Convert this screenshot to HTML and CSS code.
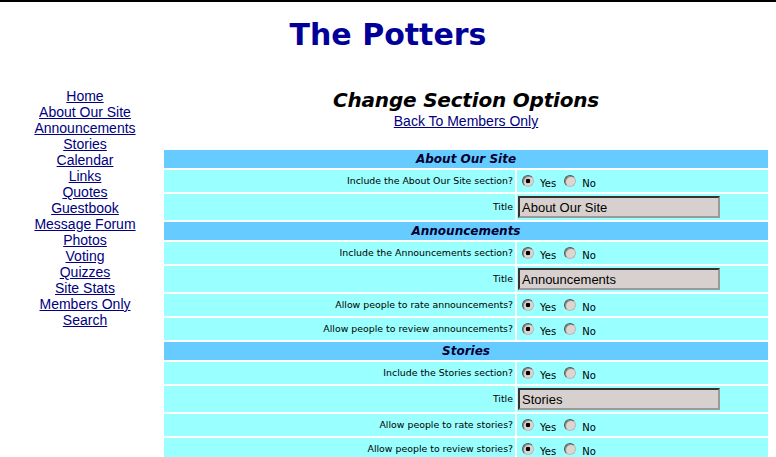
FILE: index.html
```html
<!DOCTYPE html>
<html lang="en">
<head>
<meta charset="utf-8">
<title>The Potters - Change Section Options</title>
<link rel="stylesheet" href="styles.css">
</head>
<body>
<div class="topline"></div>
<div class="page">
  <div class="site-title">The Potters</div>
  <div class="layout">
    <nav class="nav">
      <a href="#">Home</a>
      <a href="#">About Our Site</a>
      <a href="#">Announcements</a>
      <a href="#">Stories</a>
      <a href="#">Calendar</a>
      <a href="#">Links</a>
      <a href="#">Quotes</a>
      <a href="#">Guestbook</a>
      <a href="#">Message Forum</a>
      <a href="#">Photos</a>
      <a href="#">Voting</a>
      <a href="#">Quizzes</a>
      <a href="#">Site Stats</a>
      <a href="#">Members Only</a>
      <a href="#">Search</a>
    </nav>
    <main class="content">
      <h1 class="heading">Change Section Options</h1>
      <div class="back"><a href="#">Back To Members Only</a></div>
      <form class="options">
        <div class="sec">About Our Site</div>
        <div class="q">Include the About Our Site section?</div>
        <div class="a"><input type="radio" name="about" checked><span class="opt">Yes</span><input type="radio" name="about"><span class="opt">No</span></div>
        <div class="q tall">Title</div>
        <div class="a tall"><input class="text" type="text" value="About Our Site"></div>

        <div class="sec">Announcements</div>
        <div class="q">Include the Announcements section?</div>
        <div class="a"><input type="radio" name="ann" checked><span class="opt">Yes</span><input type="radio" name="ann"><span class="opt">No</span></div>
        <div class="q tall">Title</div>
        <div class="a tall"><input class="text" type="text" value="Announcements"></div>
        <div class="q">Allow people to rate announcements?</div>
        <div class="a"><input type="radio" name="annrate" checked><span class="opt">Yes</span><input type="radio" name="annrate"><span class="opt">No</span></div>
        <div class="q">Allow people to review announcements?</div>
        <div class="a"><input type="radio" name="annrev" checked><span class="opt">Yes</span><input type="radio" name="annrev"><span class="opt">No</span></div>

        <div class="sec">Stories</div>
        <div class="q">Include the Stories section?</div>
        <div class="a"><input type="radio" name="sto" checked><span class="opt">Yes</span><input type="radio" name="sto"><span class="opt">No</span></div>
        <div class="q tall">Title</div>
        <div class="a tall"><input class="text" type="text" value="Stories"></div>
        <div class="q">Allow people to rate stories?</div>
        <div class="a"><input type="radio" name="storate" checked><span class="opt">Yes</span><input type="radio" name="storate"><span class="opt">No</span></div>
        <div class="q">Allow people to review stories?</div>
        <div class="a"><input type="radio" name="storev" checked><span class="opt">Yes</span><input type="radio" name="storev"><span class="opt">No</span></div>
      </form>
    </main>
  </div>
</div>
</body>
</html>
```
FILE: styles.css
```css
html, body {
  margin: 0;
  padding: 0;
  background: #ffffff;
}

.topline {
  height: 2px;
  background: #000000;
}

.page {
  padding: 0 8px;
}

.site-title {
  margin: 0;
  padding-top: 15px;
  font-family: "DejaVu Sans", Verdana, sans-serif;
  font-weight: bold;
  font-size: 30px;
  line-height: 36px;
  color: #000099;
  text-align: center;
}

.layout {
  display: flex;
  align-items: flex-start;
  margin-top: 35px;
}

.nav {
  width: 154px;
  flex: none;
  display: flex;
  flex-direction: column;
  align-items: center;
  font-family: "Liberation Sans", Arial, sans-serif;
  font-size: 14px;
  line-height: 16px;
}

.nav a,
.back a {
  color: #000080;
  text-decoration: underline;
}

.content {
  margin-left: 2px;
  width: 604px;
  flex: none;
}

.heading {
  margin: 0;
  font-family: "DejaVu Sans", Verdana, sans-serif;
  font-weight: bold;
  font-style: italic;
  font-size: 20px;
  line-height: 25px;
  letter-spacing: -0.2px;
  color: #000000;
  text-align: center;
}

.back {
  font-family: "Liberation Sans", Arial, sans-serif;
  font-size: 14px;
  line-height: 16px;
  text-align: center;
}

.options {
  margin: 21px 0 0;
  display: grid;
  grid-template-columns: 351px 251px;
  gap: 2px;
}

.sec {
  grid-column: 1 / span 2;
  height: 18px;
  background: #66ccff;
  font-family: "DejaVu Sans", Verdana, sans-serif;
  font-weight: bold;
  font-style: italic;
  font-size: 12px;
  line-height: 18px;
  color: #000033;
  text-align: center;
}

.q {
  height: 22px;
  background: #99ffff;
  padding-right: 2px;
  font-family: "DejaVu Sans", Verdana, sans-serif;
  font-size: 9.4px;
  line-height: 22px;
  color: #000000;
  text-align: right;
  white-space: nowrap;
}

.a {
  height: 22px;
  background: #99ffff;
  padding-left: 1px;
  display: flex;
  align-items: center;
}

.q.tall {
  height: 26px;
  line-height: 26px;
}

.a.tall {
  height: 26px;
}

.a input[type="radio"] {
  -webkit-appearance: none;
  appearance: none;
  box-sizing: border-box;
  width: 12px;
  height: 12px;
  margin: 0 0 0 4px;
  border-radius: 50%;
  border: 1px solid;
  border-color: #555555 #b8b8b8 #b8b8b8 #555555;
  background: #ddd6d0;
  box-shadow: inset 1px 1px 0 #8a8a8a;
}

.a input[type="radio"]:checked {
  background: radial-gradient(circle at 50% 50%, #000000 0 2px, #ddd6d0 2.6px);
}

.a .opt + input[type="radio"] {
  margin-left: 8px;
}

.opt {
  padding-top: 6px;
  margin-left: 6px;
  font-family: "DejaVu Sans", Verdana, sans-serif;
  font-size: 10px;
  line-height: 12px;
  color: #000000;
}

.text {
  box-sizing: border-box;
  width: 202px;
  height: 22px;
  margin: 0;
  padding: 0 2px;
  border: 2px solid;
  border-color: #333333 #9a9a9a #9a9a9a #333333;
  background: #d8d0ce;
  font-family: "Liberation Sans", Arial, sans-serif;
  font-size: 13px;
  color: #000000;
}
```
